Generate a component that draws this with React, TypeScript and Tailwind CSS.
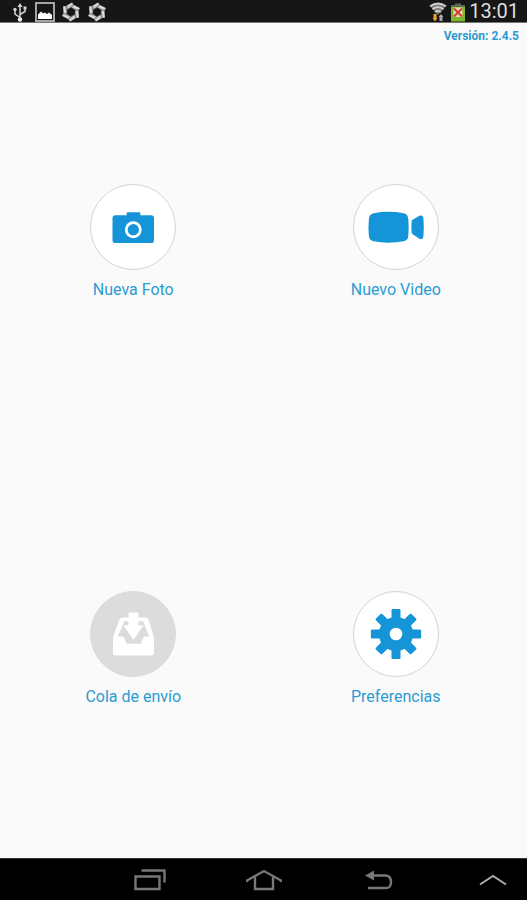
import type { ReactNode } from 'react';

/* ── Icons ───────────────────────────────────────────────── */

function CameraIcon() {
  return (
    <svg viewBox="0 0 86 86" className="size-full" aria-hidden="true">
      <path
        fill="#1595d8"
        d="M25 31H36.500v-2q0-1 1-1h12q1 0 1 1V31h11q3 0 3 3v22.500q0 3-3 3H25q-3 0-3-3V34q0-3 3-3z"
      />
      <circle cx="43.300" cy="45.800" r="7.200" fill="none" stroke="#fff" strokeWidth="2.800" />
    </svg>
  );
}

function VideoIcon() {
  return (
    <svg viewBox="0 0 86 86" className="size-full" aria-hidden="true">
      <path
        fill="#1595d8"
        d="M20 29q15.500-3 31 0Q55.300 30 55.600 35q.8 8.500 0 17-.1 4.500-4.600 5.500-15.500 3-31 0-4.500-.8-4.800-5.500-.8-8.500 0-17 .3-4.800 4.800-6z"
      />
      <path
        fill="#1595d8"
        d="M59 37.500q0-1.200 1-1.900l7-4.100q1.500-.8 2.600 0 1.300.8 1.500 3 .8 8.500 0 18-.2 2.300-1.500 2.800-1.200.5-2.600-.3l-7-4.600q-1-.7-1-1.900-.6-5 0-11z"
      />
    </svg>
  );
}

function InboxIcon() {
  return (
    <svg viewBox="0 0 86 86" className="size-full" aria-hidden="true">
      <path
        fill="#fff"
        fillRule="evenodd"
        d="M32 26h24q2 0 2.800 2l5.700 18.500V62q0 3-3 3h-36q-3 0-3-3V46.500L29.200 28q.8-2 2.800-2zM34 30 27.500 45.500h4.500q1.500 0 2 1.500l2.500 6h14.500l2.500-6q.5-1.500 2-1.500h4L53.500 30z"
      />
      <path fill="#fff" d="M38.500 21h10v13h5.500L43.500 49 33 34h5.500z" />
    </svg>
  );
}

function GearIcon() {
  const teeth = [0, 45, 90, 135, 180, 225, 270, 315];
  return (
    <svg viewBox="0 0 86 86" className="size-full" aria-hidden="true">
      {teeth.map((angle) => (
        <path
          key={angle}
          fill="#1595d8"
          d="M38.400 30V18.500q0-1.200 1.200-1.200h6.800q1.200 0 1.200 1.200V30z"
          transform={`rotate(${angle} 43 43)`}
        />
      ))}
      <circle cx="43" cy="43" r="12" fill="none" stroke="#1595d8" strokeWidth="11" />
    </svg>
  );
}

function UsbIcon() {
  return (
    <svg viewBox="0 0 16 20" className="h-5 w-4" fill="none" stroke="#d4d4d4" strokeWidth="1.500" aria-hidden="true">
      <path d="M8 17V3M8 15.500 3 12V8M8 12.500l5-3V6" />
      <path fill="#d4d4d4" stroke="none" d="M8 1l2.500 4h-5zM11.500 4.500h3v3h-3z" />
      <circle cx="3" cy="7.500" r="1.700" fill="#d4d4d4" stroke="none" />
      <circle cx="8" cy="17.500" r="2.200" fill="#eee" stroke="none" />
    </svg>
  );
}

function PictureIcon() {
  return (
    <svg viewBox="0 0 20 20" className="size-5" aria-hidden="true">
      <rect x="1" y="1" width="18" height="18" fill="none" stroke="#b5b5b5" strokeWidth="1.800" />
      <path fill="#fff" d="M3 17v-4.500l3-3 2 2 1.500-1 2.500 1.500 2-1.500 3 2.500v4z" />
    </svg>
  );
}

function ShutterIcon() {
  const blades = [0, 60, 120, 180, 240, 300];
  return (
    <svg viewBox="0 0 20 20" className="size-5" fill="none" aria-hidden="true">
      <path stroke="#b4b4b4" strokeWidth="3.600" d="M10 3.200 15.900 6.600v6.800L10 16.800 4.100 13.400V6.600z" />
      {blades.map((angle) => (
        <g key={angle} transform={`rotate(${angle} 10 10)`}>
          <path stroke="#e0e0e0" strokeWidth="1.600" d="M6 5.500 11.500 1" />
          <path stroke="#555" strokeWidth=".7" d="M8.500 6.500 13.500 3" />
        </g>
      ))}
    </svg>
  );
}

function WifiIcon() {
  return (
    <svg viewBox="0 0 18 20" className="h-5 w-[18px]" aria-hidden="true">
      <path fill="#777" d="M1 4q8-5.500 16 0l-8 9z" />
      <g fill="none" stroke="#cfcfcf" strokeWidth="1.800">
        <path d="M1 4.200q8-5.400 16 0M3.500 7.200q5.500-4 11 0M6 10q3-2 6 0" />
      </g>
      <path fill="#f0a030" d="M4.500 12h3v4h1L6 19.500 3.500 16h1z" />
      <path fill="#aaa" d="M10.500 19v-4h-1l2.500-3 2.500 3h-1v4z" />
    </svg>
  );
}

function BatteryIcon() {
  return (
    <svg viewBox="0 0 14 20" className="h-5 w-3.5" aria-hidden="true">
      <path fill="#5f6a50" d="M4 1.500h6V3h4v4H0V3h4z" />
      <path fill="#78b82a" d="M0 5h14v14.500H0z" />
      <path fill="#e8dcc0" d="M2.500 5.500h9V15h-9z" />
      <path fill="none" stroke="#d83a2a" strokeWidth="2" d="m3 6.500 8 8M11 6.500l-8 8" />
    </svg>
  );
}

/* ── Home Tiles ──────────────────────────────────────────── */

type Tile = { label: string; icon: ReactNode; disabled?: boolean };

const tiles: Tile[] = [
  { label: 'Nueva Foto', icon: <CameraIcon /> },
  { label: 'Nuevo Video', icon: <VideoIcon /> },
  { label: 'Cola de envío', icon: <InboxIcon />, disabled: true },
  { label: 'Preferencias', icon: <GearIcon /> },
];

function HomeTile({ label, icon, disabled }: Tile) {
  return (
    <button type="button" disabled={disabled} className="flex flex-col items-center gap-2.5 pb-2.5">
      <span
        className={`block size-[86px] overflow-hidden rounded-full border ${
          disabled ? 'border-[#dcdcdc] bg-[#dcdcdc]' : 'border-[#d4d4d4] bg-white'
        }`}
      >
        {icon}
      </span>
      <span className="text-base leading-5 text-[#2b9bd3]">{label}</span>
    </button>
  );
}

/* ── Screen ──────────────────────────────────────────────── */

export default function App() {
  return (
    <div className="flex min-h-screen flex-col bg-[#fafafa] font-['Roboto',sans-serif]">
      <header className="flex h-[23px] items-center justify-between border-b border-[#777] bg-[#161616] pr-2 pl-3">
        <div className="flex items-center gap-1.5 pt-0.5">
          <UsbIcon />
          <div className="flex items-center gap-1.5 pl-px">
            <PictureIcon />
            <ShutterIcon />
            <ShutterIcon />
          </div>
        </div>
        <div className="flex items-center gap-1">
          <div className="flex items-center gap-1 pt-0.5">
            <WifiIcon />
            <BatteryIcon />
          </div>
          <span className="text-xl leading-5 text-[#dedede]">13:01</span>
        </div>
      </header>

      <main className="flex flex-1 flex-col">
        <p className="px-2 pt-1.5 text-right text-xs leading-[14px] font-bold text-[#2b9bd3]">Versión: 2.4.5</p>
        <div className="grid flex-1 grid-cols-2 grid-rows-2 place-items-center pl-0.5">
          {tiles.map((tile) => (
            <HomeTile key={tile.label} {...tile} />
          ))}
        </div>
      </main>

      {/* System navigation */}
      <nav className="flex h-[42px] items-center justify-between border-t border-[#333] bg-black pr-[18px] pl-[134px]">
        <button type="button" aria-label="Recientes" className="flex w-8 justify-center">
          <svg viewBox="0 0 32 24" className="h-6 w-8 shrink-0" fill="none" stroke="#777" strokeWidth="2.400">
            <path d="M1.500 8.500h24v12.500h-24zM7.500 2.500h23v12" />
          </svg>
        </button>
        <button type="button" aria-label="Inicio" className="flex w-8 justify-center">
          <svg viewBox="0 0 36 24" className="h-6 w-9 shrink-0" fill="none" stroke="#777" strokeWidth="2.400">
            <path d="M1 14v-1.500L18 3l17 9.500V14M9 9v12h18V9" />
          </svg>
        </button>
        <button type="button" aria-label="Atrás" className="flex w-8 justify-center">
          <svg viewBox="0 0 30 24" className="h-6 w-[30px] shrink-0" fill="none" stroke="#777" strokeWidth="2.400">
            <path d="M6 7.500h15q6 0 6 6.500t-6 6H4" />
            <path fill="#777" stroke="none" d="M1 7.500l9-5v10z" />
          </svg>
        </button>
        <button type="button" aria-label="Abrir panel" className="flex w-8 justify-center">
          <svg viewBox="0 0 28 24" className="h-6 w-7 shrink-0" fill="none" stroke="#aaa" strokeWidth="2">
            <path d="M1 16.500 14 8l13 8.500" />
          </svg>
        </button>
      </nav>
    </div>
  );
}
